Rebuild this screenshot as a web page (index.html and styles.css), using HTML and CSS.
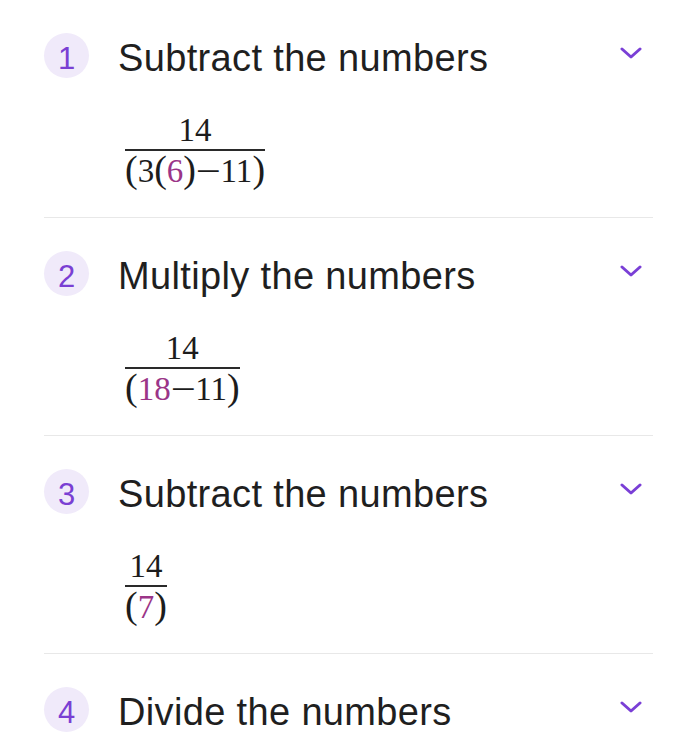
FILE: index.html
```html
<!DOCTYPE html>
<html lang="en">
<head>
    <meta charset="UTF-8">
    <meta name="viewport" content="width=device-width, initial-scale=1.0">
    <title>Solution steps</title>
    <link rel="stylesheet" href="styles.css">
</head>
<body>
    <div class="steps">
        <div class="step">
            <div class="step-head">
                <div class="badge">1</div>
                <div class="step-title">Subtract the numbers</div>
                <svg class="chevron" width="22" height="12" viewBox="0 0 22 12"><path d="M2 2 L11 10 L20 2"/></svg>
            </div>
            <div class="frac">
                <div class="num">14</div>
                <div class="bar"></div>
                <div class="den"><span class="p">(</span>3<span class="p">(</span><span class="hl">6</span><span class="p">)</span><span class="m">−</span>11<span class="p">)</span></div>
            </div>
        </div>

        <div class="step">
            <div class="step-head">
                <div class="badge">2</div>
                <div class="step-title">Multiply the numbers</div>
                <svg class="chevron" width="22" height="12" viewBox="0 0 22 12"><path d="M2 2 L11 10 L20 2"/></svg>
            </div>
            <div class="frac">
                <div class="num">14</div>
                <div class="bar"></div>
                <div class="den"><span class="p">(</span><span class="hl">18</span><span class="m">−</span>11<span class="p">)</span></div>
            </div>
        </div>

        <div class="step">
            <div class="step-head">
                <div class="badge">3</div>
                <div class="step-title">Subtract the numbers</div>
                <svg class="chevron" width="22" height="12" viewBox="0 0 22 12"><path d="M2 2 L11 10 L20 2"/></svg>
            </div>
            <div class="frac">
                <div class="num">14</div>
                <div class="bar"></div>
                <div class="den"><span class="p">(</span><span class="hl">7</span><span class="p">)</span></div>
            </div>
        </div>

        <div class="step last">
            <div class="step-head">
                <div class="badge">4</div>
                <div class="step-title">Divide the numbers</div>
                <svg class="chevron" width="22" height="12" viewBox="0 0 22 12"><path d="M2 2 L11 10 L20 2"/></svg>
            </div>
        </div>
    </div>
</body>
</html>
```

FILE: styles.css
```css
body {
    margin: 0;
    background: #ffffff;
    color: #222222;
    font-family: "Liberation Sans", Arial, sans-serif;
    overflow: hidden;
}

.steps {
    margin-left: 44px;
    width: 609px;
}

.step {
    padding: 33px 0 31px;
    border-bottom: 1px solid #e8e8e8;
}

.step.last {
    border-bottom: none;
}

.step-head {
    display: flex;
    align-items: flex-start;
    height: 45px;
}

.badge {
    width: 45px;
    height: 45px;
    border-radius: 50%;
    background: #f0eafa;
    color: #7a3fd3;
    font-size: 31px;
    line-height: 52px;
    text-align: center;
    margin-right: 29px;
    flex-shrink: 0;
}

.step-title {
    font-size: 38px;
    line-height: 45px;
    letter-spacing: 0.35px;
    margin-top: 3px;
    color: #1f1f1f;
    white-space: nowrap;
}

.chevron {
    margin-left: auto;
    margin-right: 11px;
    margin-top: 14px;
    flex-shrink: 0;
}

.chevron path {
    fill: none;
    stroke: #7a3fd6;
    stroke-width: 3;
    stroke-linecap: round;
    stroke-linejoin: round;
}

.frac {
    display: inline-flex;
    flex-direction: column;
    align-items: center;
    margin: 36px 0 0 81px;
    font-family: "Liberation Serif", "Times New Roman", serif;
    font-size: 33px;
    color: #1c1c1c;
}

.num,
.den {
    height: 33px;
    line-height: 33px;
    white-space: nowrap;
}

.bar {
    align-self: stretch;
    height: 2px;
    margin-top: 2px;
    background: #2a2a2a;
}

.den {
    margin-top: 2px;
}

.p {
    font-size: 38px;
}

.m {
    display: inline-block;
    padding: 0 3px;
    transform: scaleX(1.35);
}

.hl {
    color: #9b3588;
}
```
